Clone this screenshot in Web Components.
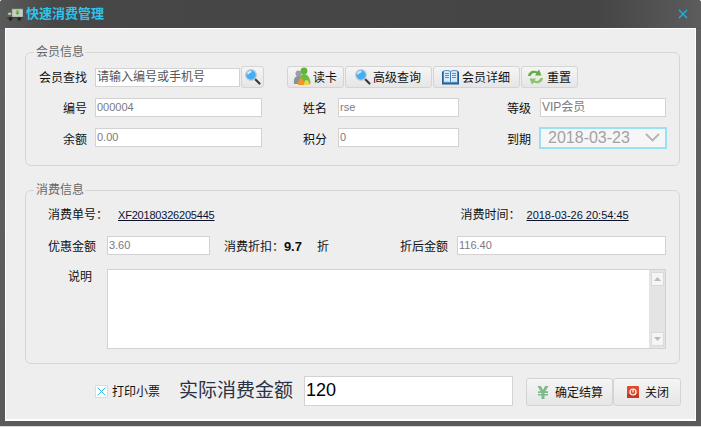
<!DOCTYPE html>
<html lang="zh"><head><meta charset="utf-8"><title>快速消费管理</title>
<style>
html,body{margin:0;padding:0;background:#fff}
body{font:12px/16px "Liberation Sans","Noto Sans CJK SC",sans-serif;color:#111}
</style></head><body>
<quick-window heading="快速消费管理">
  <member-panel></member-panel>
  <consume-panel></consume-panel>
  <pay-footer></pay-footer>
</quick-window>
<script>
const FONT='"Liberation Sans","Noto Sans CJK SC",sans-serif';
const ICONS={
 truck:`<svg width="16" height="13" viewBox="0 0 16 13"><rect x="5" y="1" width="11" height="8" fill="#c9cdc6" stroke="#8d918b" stroke-width=".6"/><path d="M1 4h4v5H0V6z" fill="#55654f"/><path d="M1.6 4.8h2.6v2H.8z" fill="#b6d6c0"/><path d="M0 9h16v1.5H0z" fill="#3e3e3a"/><circle cx="3.5" cy="11" r="1.8" fill="#23231f"/><circle cx="12.2" cy="11" r="1.8" fill="#23231f"/><path d="M9.5 2.2h2v2.4h1.3l-2.3 2.7-2.3-2.7h1.3z" fill="#5ab13c"/></svg>`,
 search:`<svg width="18" height="18" viewBox="0 0 18 18"><path d="M11 11l4.500 4.500" stroke="#3a3a3a" stroke-width="2.200" stroke-linecap="round"/><circle cx="7" cy="7" r="5.400" fill="#45aef0" stroke="#c4ced6" stroke-width="1.300"/><path d="M3.800 6.200a3.500 3.500 0 0 1 3.600-2.600" stroke="#d6f1ff" stroke-width="1.600" fill="none"/></svg>`,
 people:`<svg width="19" height="20" viewBox="0 0 19 20"><circle cx="5.500" cy="6.500" r="3" fill="#9a9ea6"/><path d="M1 17c-.8-5 1-8 4.500-8S9 12 9 17z" fill="#8d9099"/><circle cx="11" cy="4" r="3.400" fill="#62b33c"/><path d="M5.500 17c0-6 2-10 5.500-10s6.500 4 6.500 10z" fill="#6cbd3f"/><path d="M5 18c0-4 1.500-7 3-7s3 3 3 7z" fill="#f0952f"/><path d="M11 18c0-3 1-5 2.500-5s3 2 3 5z" fill="#f3d24e"/></svg>`,
 book:`<svg width="17" height="15" viewBox="0 0 17 15"><path d="M0 1.500h1.500v11H7c.8 0 1.200.4 1.500 1 .3-.6.700-1 1.500-1h5.500v-11H17V14.500H0z" fill="#1f5f9a"/><path d="M1.500 1C4 .2 7 .3 8.500 1.500V13C7 12 4 12 1.500 12.500z" fill="#dcebf6" stroke="#2774b5" stroke-width=".8"/><path d="M15.500 1C13 .2 10 .3 8.500 1.500V13c1.500-1 4.500-1 7-.5z" fill="#dcebf6" stroke="#2774b5" stroke-width=".8"/><path d="M3 3.500h4M3 5.500h4M3 7.500h4M10 3.500h4M10 5.500h4M10 7.500h4" stroke="#4a88bb" stroke-width=".9"/></svg>`,
 refresh:`<svg width="17" height="18" viewBox="0 0 17 18"><path d="M1 8C1.500 3.500 6 1.500 10.500 3.500L12 1.200 14.500 7.500 8 7.500 9.300 5.500C6.500 4.500 4.500 5.500 3.700 8z" fill="#68ae45"/><path d="M16 10c-.5 4.500-5 6.500-9.500 4.500L5 16.800 2.500 10.500H9L7.700 12.500c2.800 1 4.800 0 5.600-2.500z" fill="#8cc46a"/></svg>`,
 yuan:`<svg width="12" height="13" viewBox="0 0 12 13"><path d="M.5 0h3.400L6 4 8.100 0h3.400L8.300 5.200H11v1.700H7.500v1H11v1.700H7.500V13h-3V9.600H1V7.900h3.500v-1H1V5.200h2.700z" fill="#7fb88a"/></svg>`,
 power:`<svg width="12" height="12" viewBox="0 0 12 12"><rect width="12" height="12" rx="1" fill="#dd4a2c"/><rect y="8" width="12" height="4" fill="#c9371f"/><circle cx="6" cy="6" r="3" fill="none" stroke="#fff" stroke-width="1.200"/><path d="M6 3.500v3" stroke="#fff" stroke-width="1.200"/></svg>`
};
function def(name,html){
  customElements.define(name,class extends HTMLElement{
    constructor(){super();this.attachShadow({mode:'open'});}
    connectedCallback(){
      const g=k=>this.getAttribute(k)||'';
      this.shadowRoot.innerHTML=typeof html==='function'?html(g):html;
    }
  });
}
def('quick-window',g=>`<style>
:host{display:block;width:701px;height:427px;box-sizing:border-box;background:#5e5e5e;border-radius:3px 3px 0 0;overflow:hidden;font:12px/16px ${FONT};color:#111}
.frame{height:100%;box-sizing:border-box;display:flex;flex-direction:column;padding:0 5px 5px;border-bottom:1px solid #d8d8d8;background:linear-gradient(#3f3f3f,#4c4c4c 28px,#606060 29px,#5a5a5a)}
.title{height:28px;flex:none;display:flex;align-items:center;margin:0 -5px;padding:0 13px 0 7px;box-sizing:border-box;background:linear-gradient(90deg,#5a5a5a 0,#474747 8%,#454545 85%,#5c5c5c 100%)}
h1{margin:0 0 0 3px;font:bold 13px/16px ${FONT};color:#2fc3ec;flex:1}
.x{width:10px;height:10px;display:block}
svg{display:block}
.body{flex:1;box-sizing:border-box;border:1px solid #fff;border-bottom-width:2px;background:#eee;padding:15px 15px 0 19px}
</style><div class="frame"><div class="title">${ICONS.truck}<h1>${g('heading')}</h1><svg class="x" viewBox="0 0 10 10"><path d="M1 1l8 8M9 1l-8 8" stroke="#18b4ea" stroke-width="1.300"/></svg></div><div class="body"><slot></slot></div></div>`);
def('group-box',g=>`<style>
:host{display:block}
fieldset{margin:0;border:1px solid #d6d6d6;border-radius:6px;padding:0;min-width:0}
legend{margin-left:8px;padding:0 1px 0 2px;color:#666;font-size:12px;line-height:16px}
</style><fieldset><legend>${g('label')}</legend><slot></slot></fieldset>`);
def('text-box',g=>`<style>
:host{display:block;box-sizing:border-box;height:19px;background:#fff;border:1px solid #d2d2d2;color:${g('color')||'#7a7a80'};font:${g('size')||'11'}px/16px ${FONT};padding:0 0 0 1px;white-space:nowrap;overflow:hidden}
</style>${g('value')}`);
def('tool-button',g=>`<style>
:host{display:flex;box-sizing:border-box;align-items:center;justify-content:${g('pad')?'flex-start':'center'};padding-left:${g('pad')||'0'}px;gap:${g('gap')||'3'}px;height:22px;background:linear-gradient(#f5f5f5,#e6e6e6);border:1px solid #d4d4d4;border-radius:3px;color:#111;font:12px/16px ${FONT};white-space:nowrap}
svg{display:block;flex:none}
span{padding-top:1px}
</style>${ICONS[g('icon')]||''}${g('text')?`<span>${g('text')}</span>`:''}`);
def('date-box',g=>`<style>
:host{display:flex;box-sizing:border-box;align-items:center;justify-content:space-between;width:128px;height:22px;background:#f6f6f6;border:2px solid #9be0f4;color:#a2a2a2;font:16px/18px ${FONT};padding:0 5px 0 7px}
svg{display:block}
</style><span>${g('value')}</span><svg width="15" height="9" viewBox="0 0 15 9"><path d="M1 1l6.500 6.500L14 1" fill="none" stroke="#b4b4b4" stroke-width="1.800"/></svg>`);
def('scroll-bar',`<style>
:host{display:flex;flex-direction:column;justify-content:space-between;box-sizing:border-box;width:16px;height:100%;background:#e4e4e4;padding:2px 1px 2px 2px}
i{display:flex;align-items:center;justify-content:center;height:12px;background:#f5f5f5;border:1px solid #dadada}
svg{display:block}
</style><i><svg width="7" height="4"><path d="M3.500 0L7 4H0z" fill="#bbb"/></svg></i><i><svg width="7" height="4"><path d="M0 0h7L3.500 4z" fill="#bbb"/></svg></i>`);
def('member-panel',`<style>
:host{display:block;margin-bottom:16px}
.wrap{padding:6px 0 17px;display:flex;flex-direction:column;gap:9px}
.row{display:flex;align-items:center}
.row.top{height:22px}.row.low{height:21px}
.lab{flex:none;text-align:right;white-space:nowrap}
.top .lab{margin-top:2px}
.r2 .lab{margin-top:3px}
.r3 .lab{margin-top:5px}
.m{width:61px;margin-right:8px}
text-box{flex:none}
.tools{display:flex;margin-left:23px;gap:1px}
</style><group-box label="会员信息"><div class="wrap">
<div class="row top"><span class="lab m">会员查找</span><text-box style="width:145px" size="12" color="#555" value="请输入编号或手机号"></text-box><tool-button icon="search" style="width:23px;margin-left:1px"></tool-button>
<div class="tools"><tool-button style="width:57px" pad="5" gap="1" icon="people" text="读卡"></tool-button><tool-button style="width:87px" pad="8" gap="1" icon="search" text="高级查询"></tool-button><tool-button style="width:87px" pad="8" icon="book" text="会员详细"></tool-button><tool-button style="width:57px" pad="5" icon="refresh" text="重置"></tool-button></div></div>
<div class="row low r2"><span class="lab m">编号</span><text-box style="width:167px" value="000004"></text-box><span class="lab" style="margin-left:41px;margin-right:11px">姓名</span><text-box style="width:121px" value="rse"></text-box><span class="lab" style="margin-left:48px;margin-right:9px">等级</span><text-box style="width:126px" size="12" value="VIP会员"></text-box></div>
<div class="row low r3"><span class="lab m">余额</span><text-box style="width:167px" value="0.00"></text-box><span class="lab" style="margin-left:41px;margin-right:11px">积分</span><text-box style="width:121px" value="0"></text-box><span class="lab" style="margin-left:48px;margin-right:8px">到期</span><date-box value="2018-03-23"></date-box></div>
</div></group-box>`);
def('consume-panel',`<style>
:host{display:block;margin-bottom:12px}
.wrap{padding:9px 13px 14px 22px;display:flex;flex-direction:column}
.row{display:flex;align-items:center;white-space:nowrap}
.r1{height:16px}.r2{height:19px;margin-top:13px}.r3{height:80px;margin-top:14px;align-items:flex-start}
.r2 span,.r2 b{margin-top:2px}
u{font:11px/16px ${FONT};color:#0b1330}
.no{letter-spacing:-.2px}
b{font:bold 13px/16px ${FONT}}
text-box{flex:none}
.area{flex:none;box-sizing:border-box;width:559px;height:80px;background:#fff;border:1px solid #d2d2d2;display:flex;justify-content:flex-end}
</style><group-box label="消费信息"><div class="wrap">
<div class="row r1"><span style="width:70px">消费单号：</span><u class="no">XF20180326205445</u><span style="margin-left:246px;width:66px">消费时间：</span><u>2018-03-26 20:54:45</u></div>
<div class="row r2"><span style="width:59px">优惠金额</span><text-box style="width:103px" value="3.60"></text-box><span style="margin-left:14px;width:60px">消费折扣：</span><b>9.7</b><span style="margin-left:15px">折</span><span style="margin-left:71px">折后金额</span><text-box style="width:209px;margin-left:9px" value="116.40"></text-box></div>
<div class="row r3"><span style="margin-left:20px;width:39px">说明</span><div class="area"><scroll-bar></scroll-bar></div></div>
</div></group-box>`);
def('pay-footer',`<style>
:host{display:flex;align-items:center;height:30px;white-space:nowrap}
.cb{box-sizing:border-box;width:13px;height:13px;background:#fff;border:1px solid #dcdcdc;margin-left:70px;flex:none}
.cb svg{display:block}
.t{margin-left:4px;margin-top:2px}
.amt{font-size:19px;line-height:24px;margin-left:19px;color:#2a3245}
text-box{height:30px;width:209px;margin-left:11px;font-size:18px;line-height:27px;padding-left:1px;flex:none}
.btns{display:flex;margin-left:13px;margin-top:2px}
tool-button{height:28px}
</style><div class="cb"><svg width="11" height="11" viewBox="0 0 11 11"><path d="M1.500 1.500l8 8M9.500 1.500l-8 8" stroke="#35bde8"/></svg></div><span class="t">打印小票</span><span class="amt">实际消费金额</span><text-box color="#000" value="120"></text-box><div class="btns"><tool-button style="width:87px" pad="10" gap="6" icon="yuan" text="确定结算"></tool-button><tool-button style="width:68px" pad="13" gap="6" icon="power" text="关闭"></tool-button></div>`);
</script>
</body></html>
